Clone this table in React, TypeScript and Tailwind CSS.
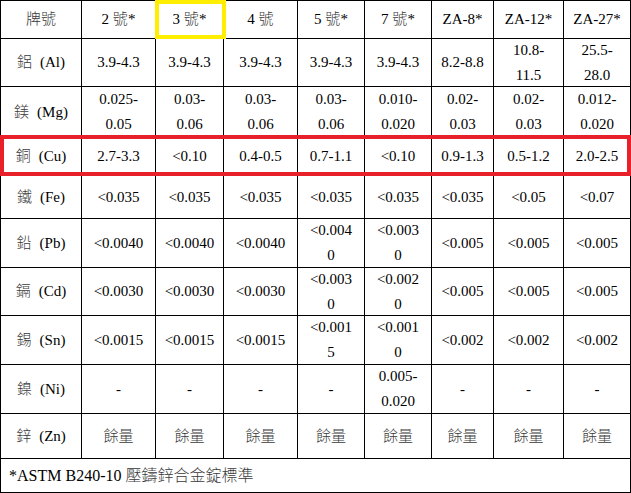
import React from 'react';

// column widths and row heights read off the reference grid
const COLS = 'grid-cols-[81px_74px_68px_74px_67px_67px_62px_70px_67px]';

const HEAD = ['牌號', '2 號*', '3 號*', '4 號', '5 號*', '7 號*', 'ZA-8*', 'ZA-12*', 'ZA-27*'];

const ROWS: { zh: string; sym: string; h: string; cells: string[] }[] = [
  { zh: '鋁', sym: 'Al', h: 'h-[48px]', cells: ['3.9-4.3', '3.9-4.3', '3.9-4.3', '3.9-4.3', '3.9-4.3', '8.2-8.8', '10.8-\n11.5', '25.5-\n28.0'] },
  { zh: '鎂', sym: 'Mg', h: 'h-[51px]', cells: ['0.025-\n0.05', '0.03-\n0.06', '0.03-\n0.06', '0.03-\n0.06', '0.010-\n0.020', '0.02-\n0.03', '0.02-\n0.03', '0.012-\n0.020'] },
  { zh: '銅', sym: 'Cu', h: 'h-[38px]', cells: ['2.7-3.3', '<0.10', '0.4-0.5', '0.7-1.1', '<0.10', '0.9-1.3', '0.5-1.2', '2.0-2.5'] },
  { zh: '鐵', sym: 'Fe', h: 'h-[43px]', cells: ['<0.035', '<0.035', '<0.035', '<0.035', '<0.035', '<0.035', '<0.05', '<0.07'] },
  { zh: '鉛', sym: 'Pb', h: 'h-[49px]', cells: ['<0.0040', '<0.0040', '<0.0040', '<0.004\n0', '<0.003\n0', '<0.005', '<0.005', '<0.005'] },
  { zh: '鎘', sym: 'Cd', h: 'h-[48px]', cells: ['<0.0030', '<0.0030', '<0.0030', '<0.003\n0', '<0.002\n0', '<0.005', '<0.005', '<0.005'] },
  { zh: '錫', sym: 'Sn', h: 'h-[49px]', cells: ['<0.0015', '<0.0015', '<0.0015', '<0.001\n5', '<0.001\n0', '<0.002', '<0.002', '<0.002'] },
  { zh: '鎳', sym: 'Ni', h: 'h-[49px]', cells: ['-', '-', '-', '-', '0.005-\n0.020', '-', '-', '-'] },
  { zh: '鋅', sym: 'Zn', h: 'h-[45px]', cells: ['餘量', '餘量', '餘量', '餘量', '餘量', '餘量', '餘量', '餘量'] },
];

// CJK glyphs in the reference print thinner and greyer than the Latin text
function Txt({ s }: { s: string }) {
  const parts = s.split(/([\u3400-\u9fff]+)/);
  return (
    <>
      {parts.map((p, i) =>
        /[\u3400-\u9fff]/.test(p) ? (
          <span key={i} className="font-light text-[#3a3a3a]">
            {p}
          </span>
        ) : (
          <React.Fragment key={i}>{p}</React.Fragment>
        ),
      )}
    </>
  );
}

function Cell({ children, h }: { children: React.ReactNode; h: string }) {
  return (
    <div
      className={`${h} flex items-center justify-center whitespace-pre-line border-r border-b border-black text-center leading-[25px]`}
    >
      {children}
    </div>
  );
}

export default function App() {
  return (
    <div
      className="relative h-[493px] w-[631px] bg-white text-[15px] text-black"
      style={{ fontFamily: '"Liberation Serif", "Noto Sans CJK TC", serif' }}
    >
      <div className={`grid ${COLS} border-l border-t border-black`}>
        {HEAD.map((t) => (
          <Cell key={t} h="h-[38px]">
            <span>
              <Txt s={t} />
            </span>
          </Cell>
        ))}
        {ROWS.map((r) => (
          <React.Fragment key={r.sym}>
            <Cell h={r.h}>
              <span className="font-light text-[#3a3a3a]">{r.zh}</span>
              <span className="ml-2">({r.sym})</span>
            </Cell>
            {r.cells.map((c, i) => (
              <Cell key={i} h={r.h}>
                <span>
                  <Txt s={c} />
                </span>
              </Cell>
            ))}
          </React.Fragment>
        ))}
        <div className="col-span-9 flex h-[34px] items-center border-r border-b border-black pl-2 text-[16px]">
          <span>
            <Txt s="*ASTM B240-10 壓鑄鋅合金錠標準" />
          </span>
        </div>
      </div>

      {/* highlight boxes drawn over the table */}
      <div className="pointer-events-none absolute left-[155px] top-0 h-[39px] w-[71px] border-4 border-[#ffee00]" />
      <div className="pointer-events-none absolute left-0 top-[135px] h-[41px] w-[631px] border-4 border-[#e8202a]" />
    </div>
  );
}
